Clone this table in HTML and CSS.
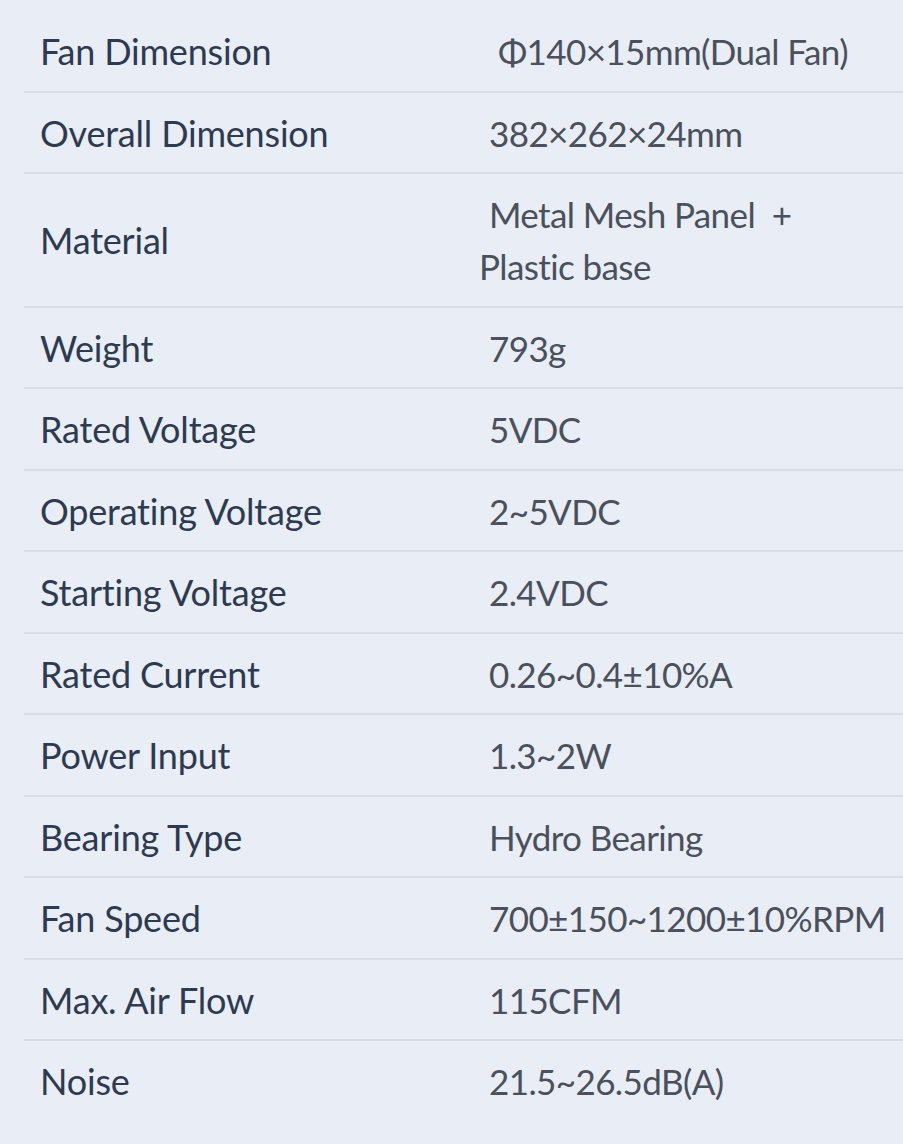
FILE: index.html
```html
<!DOCTYPE html>
<html lang="en">
<head>
<meta charset="utf-8">
<title>Specifications</title>
<link rel="stylesheet" href="styles.css">
</head>
<body>
<div class="page">
  <table class="spec">
    <tbody>
      <tr><td class="label">Fan Dimension</td><td class="value indent-2">Φ140×15mm(Dual Fan)</td></tr>
      <tr><td class="label">Overall Dimension</td><td class="value">382×262×24mm</td></tr>
      <tr><td class="label">Material</td><td class="value">Metal Mesh Panel&nbsp; +<br>Plastic base</td></tr>
      <tr><td class="label">Weight</td><td class="value">793g</td></tr>
      <tr><td class="label">Rated Voltage</td><td class="value">5VDC</td></tr>
      <tr><td class="label">Operating Voltage</td><td class="value">2~5VDC</td></tr>
      <tr><td class="label">Starting Voltage</td><td class="value">2.4VDC</td></tr>
      <tr><td class="label">Rated Current</td><td class="value">0.26~0.4±10%A</td></tr>
      <tr><td class="label">Power Input</td><td class="value">1.3~2W</td></tr>
      <tr><td class="label">Bearing Type</td><td class="value">Hydro Bearing</td></tr>
      <tr><td class="label">Fan Speed</td><td class="value">700±150~1200±10%RPM</td></tr>
      <tr><td class="label">Max. Air Flow</td><td class="value">115CFM</td></tr>
      <tr><td class="label">Noise</td><td class="value">21.5~26.5dB(A)</td></tr>
    </tbody>
  </table>
</div>
</body>
</html>
```

FILE: styles.css
```css
html, body {
  margin: 0;
  padding: 0;
  background: #e9edf5;
}

.page {
  padding: 11px 0 40px 24px;
  font-family: Lato, "Open Sans", "Noto Sans", sans-serif;
  font-size: 36px;
  line-height: 52px;
}

.spec {
  width: 879px;
  border-collapse: collapse;
  table-layout: fixed;
}

.spec td {
  padding: 14px 0 13.5px 0;
  border-bottom: 2px solid #d9dde5;
  vertical-align: middle;
}

.spec tr:last-child td {
  border-bottom: none;
}

.label {
  width: 455px;
  padding-left: 16px !important;
  box-sizing: border-box;
  color: #2d3a50;
  letter-spacing: -0.2px;
}

.value {
  color: #4a505c;
  font-size: 35px;
  letter-spacing: -0.6px;
  text-indent: 10px;
}

.value.indent-2 {
  text-indent: 19px;
}
```
